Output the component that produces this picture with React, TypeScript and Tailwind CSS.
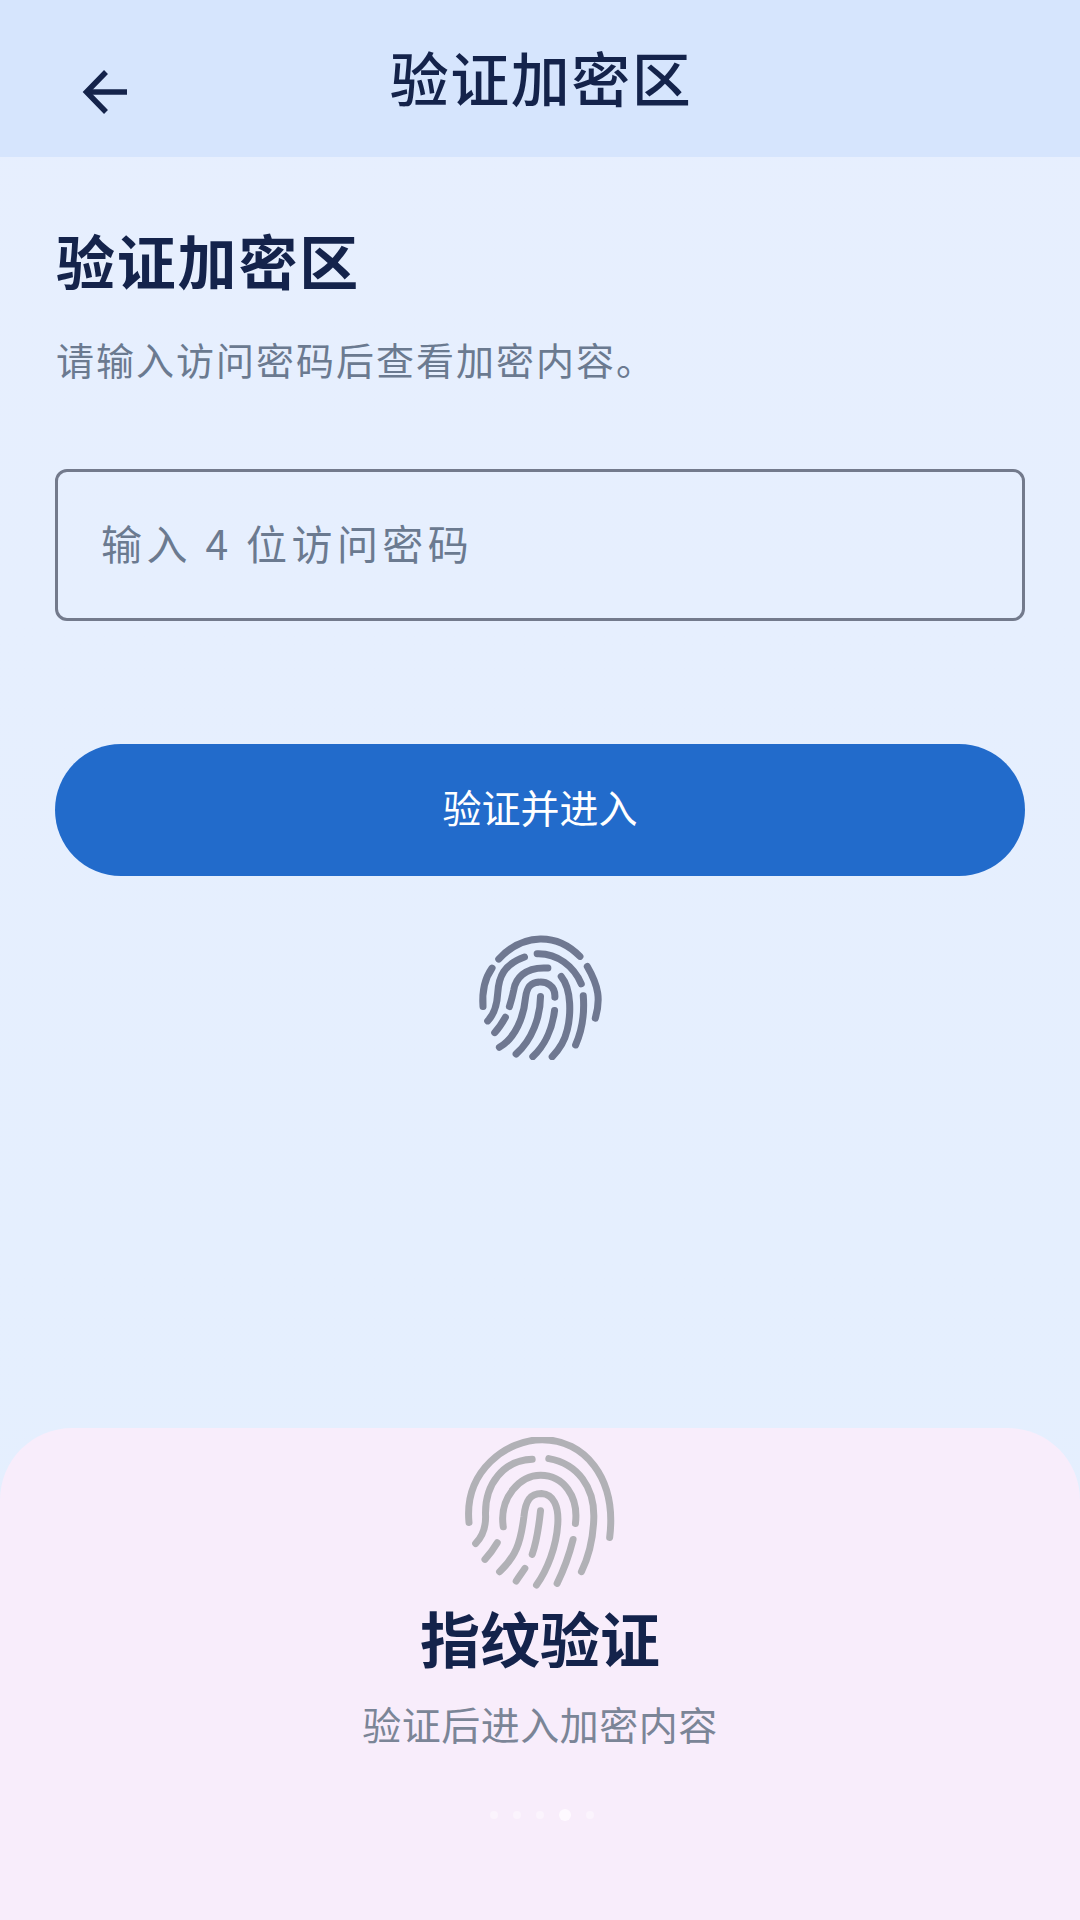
const cjk = "font-['Noto_Sans_CJK_SC','Noto_Sans',sans-serif]";

function BackArrow() {
  return (
    <svg width="46" height="46" viewBox="0 0 46 46" fill="none" stroke="#14234b" strokeWidth="5.500">
      <path d="M45 23H5" />
      <path d="M24 3L4.500 23L24 43" />
    </svg>
  );
}

function SmallFingerprint() {
  return (
    <svg className="block" width="127" height="127" viewBox="110 70 380 380" fill="none" stroke="#6f7891" strokeWidth="21" strokeLinecap="round">
      <path d="M175 148C250 68 350 70 418 140" />
      <path d="M290 132C350 130 400 170 422 222" />
      <path d="M440 170C475 230 480 270 464 325" />
      <path d="M155 175C130 210 125 250 128 290" />
      <path d="M252 142C190 165 175 200 172 250C170 285 160 315 142 333" />
      <path d="M322 175C250 170 225 210 220 240C215 265 212 275 207 290" />
      <path d="M343 262C345 225 315 215 295 217C265 218 258 240 255 265C250 320 225 385 177 412" />
      <path d="M300 260C300 320 275 390 227 432" />
      <path d="M342 302C335 360 310 410 277 440" />
      <path d="M362 200C395 240 390 320 380 360C372 395 355 420 335 440" />
      <path d="M428 258C432 310 425 360 405 405" />
      <path d="M195 322C185 340 175 355 163 368" />
    </svg>
  );
}

function LargeFingerprint() {
  return (
    <svg className="block" width="153" height="153" viewBox="100 50 460 460" fill="none" stroke="#b1b1b6" strokeWidth="21" strokeLinecap="round">
      <path d="M115 307C100 150 230 58 335 58C460 58 560 170 538 352" />
      <path d="M305 117C220 120 160 190 165 290C165 320 155 350 135 370" />
      <path d="M355 115C440 130 495 200 490 300C488 350 475 410 453 455" />
      <path d="M218 320C205 230 270 165 330 165C400 165 445 230 435 310" />
      <path d="M207 455C255 410 270 370 280 290C285 240 300 220 333 220C370 222 385 260 382 310C378 380 350 450 318 495" />
      <path d="M330 272C325 320 320 360 305 403" />
      <path d="M428 358C415 410 400 450 380 490" />
      <path d="M200 368C190 385 175 405 163 418" />
      <path d="M283 445C275 457 265 470 257 483" />
    </svg>
  );
}

export default function App() {
  return (
    <div className={`${cjk} flex h-[1920px] w-[1080px] flex-col overflow-hidden bg-gradient-to-b from-[#e7effe] to-[#e4effe]`}>
      {/* Top bar */}
      <header className="grid h-[157px] grid-cols-[1fr_auto_1fr] bg-[#d6e5fd]">
        <div className="pl-[82px] pt-[69px]">
          <BackArrow />
        </div>
        <h2 className="pl-[2px] pt-[47px] text-[59px] leading-[60px] font-medium tracking-[1.500px] text-[#14234b]">验证加密区</h2>
        <div />
      </header>

      {/* Form */}
      <main className="flex flex-col px-[55px]">
        <h1 className="pl-[1px] pt-[73px] text-[59px] leading-[60px] font-bold tracking-[1.800px] text-[#14234b]">验证加密区</h1>
        <p className="mt-[49px] pl-[1px] text-[38px] leading-[40px] tracking-[2px] text-[#6b7a90]">请输入访问密码后查看加密内容。</p>
        <div className="mt-[90px] flex h-[152px] items-center rounded-[12px] border-[3px] border-[#737a8c] pb-[4px] pl-[43px] text-[41px] tracking-[4.400px] text-[#6b7a90]">
          输入 4 位访问密码
        </div>
        <button className="mt-[123px] flex h-[132px] items-center justify-center rounded-full bg-[#226bcb] pb-[7px] text-[39px] text-white">
          验证并进入
        </button>
        <div className="mt-[57px] flex justify-center">
          <SmallFingerprint />
        </div>
      </main>

      <div className="flex-1" />

      {/* Fingerprint sheet */}
      <section className="flex h-[492px] flex-col items-center rounded-t-[72px] bg-[#f8edfb] pt-[9px]">
        <LargeFingerprint />
        <h3 className="mt-[17px] text-[60px] leading-[60px] font-bold text-[#14234b]">指纹验证</h3>
        <p className="mt-[31px] text-[39px] leading-[50px] tracking-[0.500px] text-[#7b8597]">验证后进入加密内容</p>
        <div className="mt-[61px] flex items-center gap-[15px] pl-[4px]">
          <span className="h-2 w-2 rounded-full bg-[#fbf4fd]" />
          <span className="h-2 w-2 rounded-full bg-[#fbf4fd]" />
          <span className="h-2 w-2 rounded-full bg-[#fbf4fd]" />
          <span className="h-3 w-3 rounded-full bg-[#fefaff]" />
          <span className="h-2 w-2 rounded-full bg-[#fbf4fd]" />
        </div>
      </section>
    </div>
  );
}
